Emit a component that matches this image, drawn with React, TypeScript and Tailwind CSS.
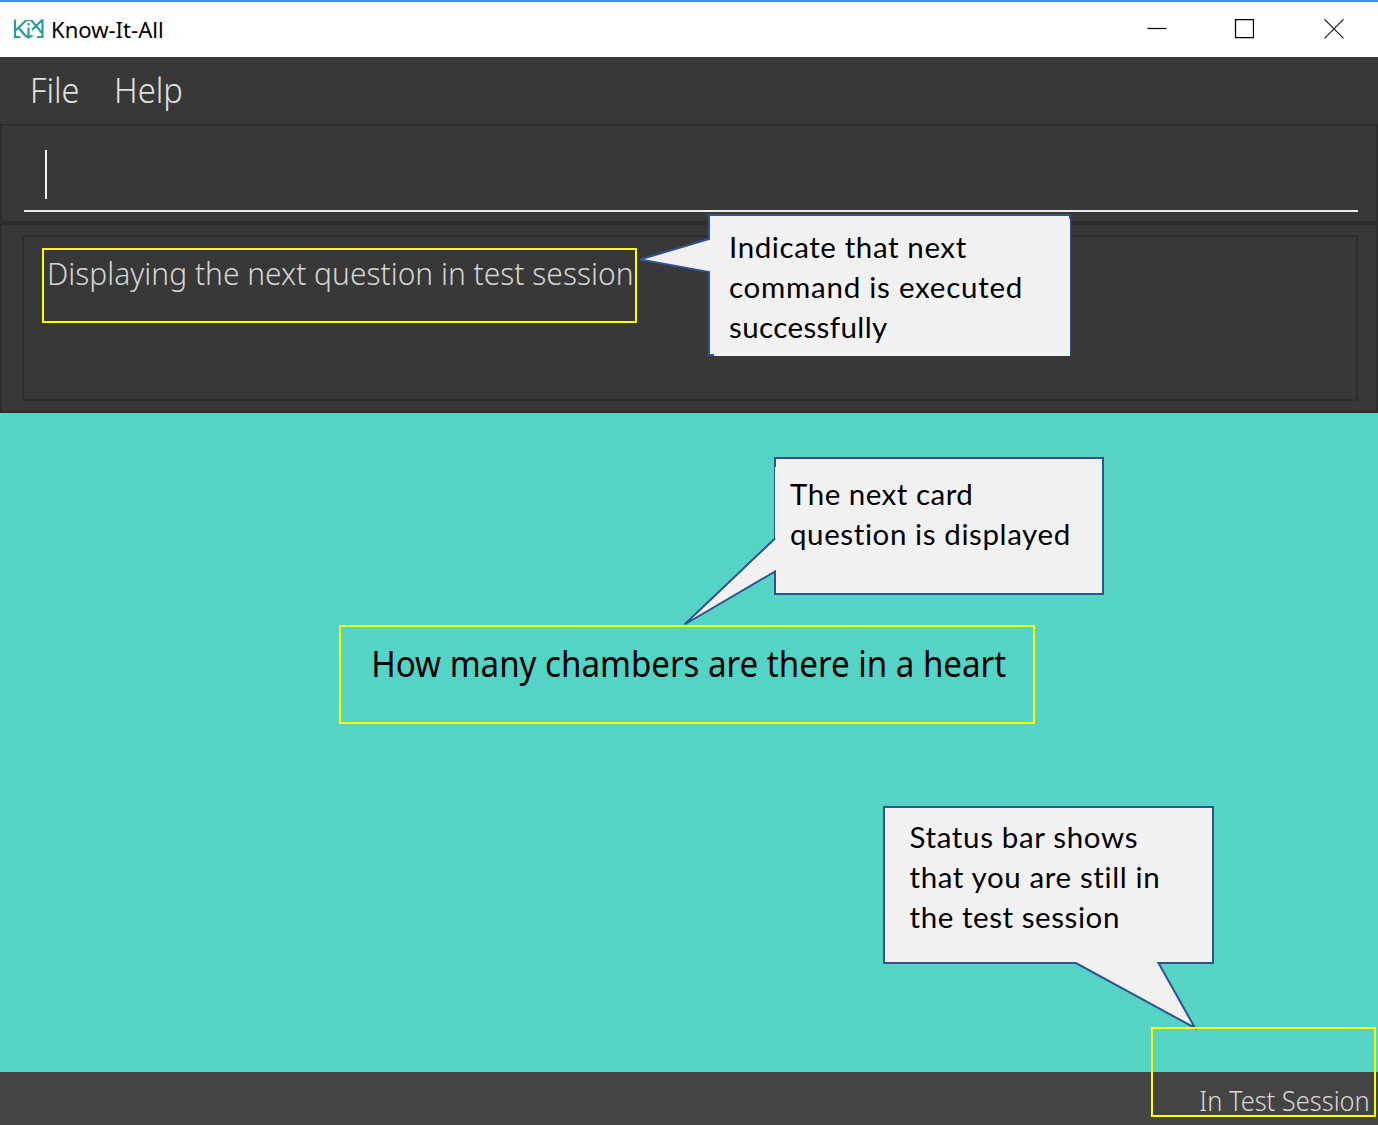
import type { ReactNode } from 'react'

function Logo() {
  return (
    <svg width="32" height="22" viewBox="0 0 32 22" fill="none" stroke="#2f9c9b" strokeWidth="2.2" className="mb-[2px]">
      <path d="M2 1.500v17.500h5.500M2 13L13 2.500M5.500 9.500l6.500 8M29.500 1.500v17.500H24M29.500 1.500L19 12M18.500 2.500L29 15M12 17.500l3.500 2 4-2M15.500 9.500v9M15.500 5v2.500" />
      <path strokeWidth="1.2" d="M12 2.500h7" />
    </svg>
  )
}

function WindowControls() {
  return (
    <div className="mb-[2px] flex items-center pr-[34px]">
      <svg width="20" height="20" viewBox="0 0 20 20" stroke="#000" strokeWidth="1.2" className="mr-[67px]">
        <path d="M.5 9.500h19" />
      </svg>
      <svg width="20" height="20" viewBox="0 0 20 20" fill="none" stroke="#000" strokeWidth="1.3" className="mr-[70px]">
        <path d="M1.500.700h18v18h-18z" />
      </svg>
      <svg width="20" height="20" viewBox="0 0 20 20" stroke="#222" strokeWidth="1.2">
        <path d="M.5.3l19 19M19.500.3l-19 19" />
      </svg>
    </div>
  )
}

function Highlight({ className }: { className: string }) {
  return <div className={'absolute border-2 border-[#ffff00] ' + className} />
}

function CalloutText({ className, children }: { className: string; children: ReactNode }) {
  return (
    <div className={'absolute flex flex-col whitespace-nowrap font-[Lato,sans-serif] text-[29.5px] leading-[40px] text-black ' + className}>
      {children}
    </div>
  )
}

export default function App() {
  return (
    <div className="relative flex h-[1125px] w-[1378px] flex-col overflow-hidden bg-[#383838] font-['Noto_Sans',sans-serif]">
      <header className="flex h-[57px] shrink-0 items-center justify-between border-t-2 border-t-[#3f93dc] bg-white">
        <div className="flex items-center pl-[13px]">
          <Logo />
          <span className="ml-[6px] origin-left scale-x-[0.98] text-[22.5px] leading-[30px] text-black">Know-It-All</span>
        </div>
        <WindowControls />
      </header>

      <nav className="flex h-[67px] shrink-0 pt-[9px] text-[35.5px] leading-[47px] font-light text-[#e0e0e0]">
        <span className="ml-[30px] w-[84px] origin-left scale-x-[0.915]">File</span>
        <span className="origin-left scale-x-[0.92]">Help</span>
      </nav>

      <section className="flex h-[99px] shrink-0 flex-col border-2 border-[#2d2d2d] pt-[24px] pr-[18px] pl-[21.500px]">
        <div className="flex h-[62px] border-b-2 border-[#ececec] pl-[21px]">
          <div className="h-[49px] w-[2px] bg-[#f4f4f4]" />
        </div>
      </section>

      <section className="flex h-[190px] shrink-0 border-2 border-[#2d2d2d] pt-[10px] pr-[18px] pb-[10px] pl-[20px]">
        <div className="flex-1 border-2 border-[#2d2d2d] pt-[16px] pl-[23px]">
          <span className="inline-block origin-left scale-x-[0.936] text-[32px] leading-[40px] font-light whitespace-nowrap text-[#d4d4d4]">
            Displaying the next question in test session
          </span>
        </div>
      </section>

      <main className="flex h-[659px] shrink-0 justify-center bg-[#55d3c4] pt-[226px]">
        <p className="origin-center scale-x-[0.932] text-[35.5px] leading-[48px] whitespace-nowrap text-black">
          How many chambers are there in a heart
        </p>
      </main>

      <footer className="flex flex-1 justify-end bg-[#444444] pt-[8px] pr-[8px]">
        <span className="origin-right scale-x-[0.908] text-[28px] leading-[40px] font-light whitespace-nowrap text-[#d8d8d8]">
          In Test Session
        </span>
      </footer>

      <svg className="absolute inset-0" width="1378" height="1125" fill="#f1f1f1" stroke="#2f5291" strokeWidth="2">
        <path stroke="none" d="M709 215H1070V356H709V272L640 259.500L709 239Z" />
        <path fill="none" d="M1070 219V215H709V239L640 259.500L709 272V355H714" />
        <path fill="none" strokeWidth="1" d="M1070.500 219V356" />
        <path stroke="none" d="M775 458H1103V594H775V571.500L685 624.500L775 539Z" />
        <path fill="none" d="M775 467V458H1103V594H775V571.500L684.500 624.500L775 538.500" />
        <path fill="none" strokeWidth="1" d="M774.500 467V539" />
        <path d="M884 807H1213V963H1158.500L1195 1028L1076 963H884Z" />
      </svg>

      <Highlight className="top-[248px] left-[42px] h-[75px] w-[595px]" />
      <Highlight className="top-[625px] left-[339px] h-[99px] w-[696px]" />
      <Highlight className="top-[1027px] left-[1151px] h-[90px] w-[225px]" />

      <CalloutText className="top-[227px] left-[729px]">
        <span className="tracking-[0.6px]">Indicate that next</span>
        <span className="tracking-[0.75px]">command is executed</span>
        <span className="tracking-[0.4px]">successfully</span>
      </CalloutText>
      <CalloutText className="top-[474px] left-[790px]">
        <span className="tracking-[0.5px]">The next card</span>
        <span className="tracking-[0.6px]">question is displayed</span>
      </CalloutText>
      <CalloutText className="top-[817px] left-[909.500px]">
        <span className="tracking-[0.65px]">Status bar shows</span>
        <span className="tracking-[0.62px]">that you are still in</span>
        <span className="tracking-[0.57px]">the test session</span>
      </CalloutText>
    </div>
  )
}
